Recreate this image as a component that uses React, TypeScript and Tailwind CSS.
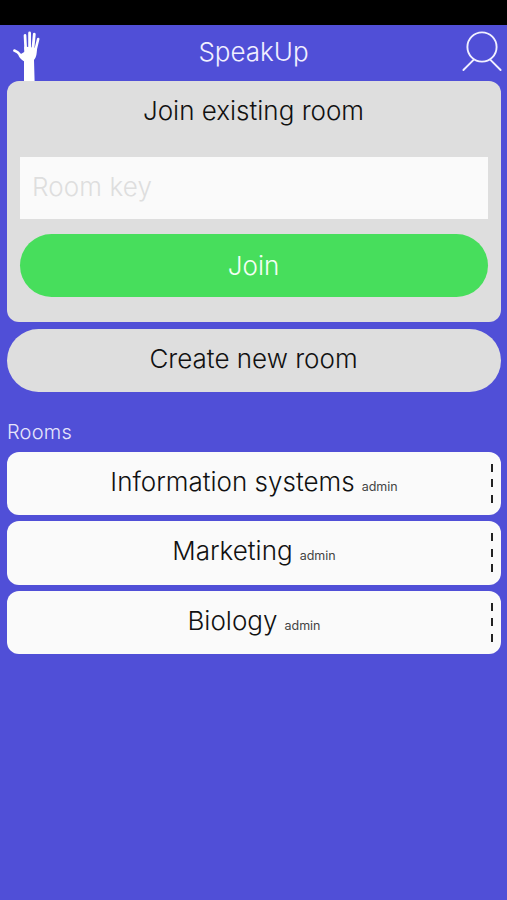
import { useState } from 'react'

interface Room {
  name: string
  role: string
}

const ROOMS: Room[] = [
  { name: 'Information systems', role: 'admin' },
  { name: 'Marketing', role: 'admin' },
  { name: 'Biology', role: 'admin' },
]

function HandIcon() {
  return (
    <svg width="30" height="51" viewBox="0 0 30 51" className="block" fill="none" stroke="#fff" strokeLinecap="round" strokeLinejoin="round">
      <path d="M14 5.4 L14.7 19" strokeWidth="2.7" />
      <path d="M18.6 3 L18.6 19" strokeWidth="2.8" />
      <path d="M23.3 4.2 L21.9 19" strokeWidth="2.8" />
      <path d="M27.2 9 L24.5 20" strokeWidth="2.6" />
      <path d="M3.4 20.6 Q7 21.9 9 24.8 Q11 26.4 14 25" strokeWidth="2.7" />
      <path
        d="M13.3 16.5 L25.9 18 C26 23 25.4 27.5 23 30 L23.6 51 H13 V31.2 C10.8 30.2 9 28.4 7.4 25.6 L13.2 22 Z"
        fill="#fff"
        stroke="none"
      />
    </svg>
  )
}

function ProfileIcon() {
  return (
    <svg width="40" height="42" viewBox="0 0 40 42" className="block" fill="none" stroke="#f1f0ff" strokeWidth="1.9" strokeLinecap="round">
      <circle cx="20" cy="16" r="14.6" />
      <path d="M11.8 28.6 L1.4 39" />
      <path d="M28.2 28.6 L38.6 39" />
    </svg>
  )
}

function RoomRow({ room }: { room: Room }) {
  return (
    <li className="flex h-[63.5px] items-center rounded-[12px] bg-[#fafafa] pr-[8px] pl-[10px]">
      <button className="flex flex-1 items-baseline justify-center gap-[7px] pb-[3px]">
        <span className="text-[26px] leading-8 text-[#111]">{room.name}</span>
        <span className="text-[12.5px] leading-4 font-normal text-[#444]">{room.role}</span>
      </button>
      <span className="flex flex-col gap-[7.5px]">
        <span className="h-[8px] w-[2px] bg-[#222]" />
        <span className="h-[8px] w-[2px] bg-[#222]" />
        <span className="h-[8px] w-[2px] bg-[#222]" />
      </span>
    </li>
  )
}

export default function App() {
  const [key, setKey] = useState('')

  return (
    <div className="flex h-[900px] w-[507px] flex-col overflow-hidden bg-[#504fd7] font-['Inter','Liberation_Sans',sans-serif] font-[330]">
      <div className="h-[25px] shrink-0 bg-black" />

      <header className="flex h-[56px] shrink-0 items-end justify-between pr-[5px] pl-[11px]">
        <HandIcon />
        <h1 className="pr-[5px] pb-[13px] pl-[9px] text-[26px] leading-8 text-[#f1f0ff]">SpeakUp</h1>
        <div className="pb-[8px]">
          <ProfileIcon />
        </div>
      </header>

      <main className="flex flex-col pr-[6px] pl-[7px]">
        <section className="flex h-[241px] flex-col rounded-[12px] bg-[#dedede] px-[13px] pt-[14px]">
          <h2 className="pr-px text-center text-[26px] leading-8 text-[#111]">Join existing room</h2>
          <input
            value={key}
            onChange={e => setKey(e.target.value)}
            placeholder="Room key"
            className="mt-[30px] h-[61.5px] shrink-0 bg-[#fafafa] px-[12px] pb-[2px] text-[26px] tracking-[0.1px] text-[#111] outline-none placeholder:text-[#dedede]"
          />
          <button className="mt-[15.5px] h-[63px] shrink-0 rounded-full bg-[#47de5c] pr-px text-[26px] text-[#f4fff4]">Join</button>
        </section>

        <button className="mt-[6.5px] h-[63px] rounded-full bg-[#dedede] pr-px pb-[3px] text-[26px] text-[#111]">Create new room</button>

        <h3 className="mt-[28px] text-[20px] leading-6 tracking-[0.2px] text-[#e6e5fb]">Rooms</h3>
        <ul className="mt-[8px] flex flex-col gap-[6px]">
          {ROOMS.map(room => (
            <RoomRow key={room.name} room={room} />
          ))}
        </ul>
      </main>
    </div>
  )
}
